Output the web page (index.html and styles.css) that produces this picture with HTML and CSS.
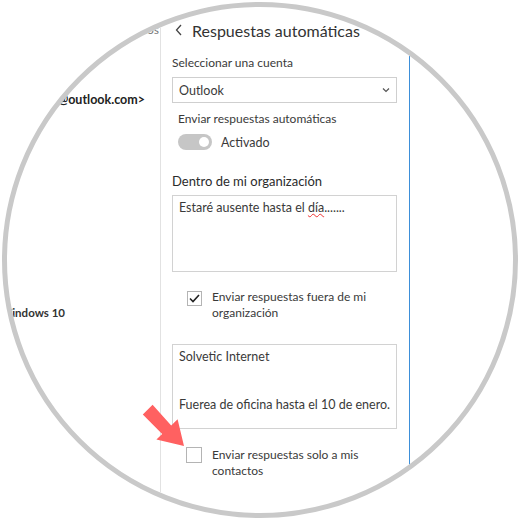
FILE: index.html
```html
<!DOCTYPE html>
<html lang="es">
<head>
  <meta charset="UTF-8">
  <title>Respuestas automáticas</title>
  <link rel="stylesheet" href="styles.css">
</head>
<body>
  <div class="lens">
    <div class="screen">
      <div class="mail-pane">
        <div class="mail-line top-line"><span>Mis contactos</span></div>
        <div class="mail-line sender"><span>Solvetic &lt;solvetic@outlook.com&gt;</span></div>
        <div class="mail-line footer-line"><span>Enviado desde Correo para Windows 10</span></div>
      </div>

      <div class="settings-pane">
        <div class="pane-title">
          <svg class="back" width="8" height="12" viewBox="0 0 8 12"><path d="M6 1 L1.5 6 L6 11" fill="none" stroke="#444" stroke-width="1.3"/></svg>
          <h1>Respuestas automáticas</h1>
        </div>

        <p class="label">Seleccionar una cuenta</p>
        <div class="select-box">
          <span>Outlook</span>
          <svg width="8" height="6" viewBox="0 0 8 6"><path d="M1 1.5 L4 4.5 L7 1.5" fill="none" stroke="#555" stroke-width="1.2"/></svg>
        </div>

        <p class="label indent">Enviar respuestas automáticas</p>
        <div class="toggle-row">
          <span class="toggle"><span class="knob"></span></span>
          <span>Activado</span>
        </div>

        <p class="section">Dentro de mi organización</p>
        <div class="text-box inside">Estaré ausente hasta el <span class="typo">día</span>.......</div>

        <div class="check-row first">
          <span class="check checked">
            <svg width="11" height="9" viewBox="0 0 11 9"><path d="M1 4.5 L4 7.5 L10 1" fill="none" stroke="#222" stroke-width="1.6"/></svg>
          </span>
          <span class="check-text">Enviar respuestas fuera de mi<br>organización</span>
        </div>

        <div class="text-box outside">Solvetic Internet


Fuerea de oficina hasta el 10 de enero.</div>

        <div class="check-row last">
          <span class="check"></span>
          <span class="check-text">Enviar respuestas solo a mis<br>contactos</span>
        </div>
      </div>
    </div>

    <svg class="pointer" width="60" height="60" viewBox="0 0 60 60">
      <polygon points="54,56 47.6,29.2 41.2,35.6 22.6,14.8 12.8,24.6 32.2,44 26.4,49.6" fill="#ff6161"/>
    </svg>
  </div>
</body>
</html>
```

FILE: styles.css
```css
body {
  margin: 0;
  background: #fff;
  font-family: "Lato", "Open Sans", sans-serif;
  color: #3a3a3a;
}

.lens {
  position: relative;
  width: 516px;
  height: 516px;
  margin: 2px;
  box-sizing: border-box;
  border: 5px solid #c9c9c9;
  border-radius: 50%;
  overflow: hidden;
  background: #fff;
}

.screen {
  display: flex;
  height: 100%;
}

/* left: mail preview */
.mail-pane {
  width: 153px;
  flex-shrink: 0;
  border-right: 1px solid #e2e2e2;
  display: flex;
  flex-direction: column;
}

.mail-line {
  display: flex;
  justify-content: flex-end;
  white-space: nowrap;
  font-size: 13px;
  line-height: 16px;
}

.top-line {
  margin-top: 15px;
  color: #777;
  font-size: 12px;
  padding-right: 1px;
}

.sender {
  margin-top: 54px;
  padding-right: 15px;
  font-weight: bold;
  color: #222;
  font-size: 12.5px;
}

.footer-line {
  margin-top: 197px;
  width: 58px;
  font-weight: bold;
  color: #333;
  font-size: 11.5px;
}

/* right: settings flyout */
.settings-pane {
  width: 225px;
  flex-shrink: 0;
  padding: 12px 12px 0 11px;
  border-right: 1px solid #3d8fd9;
}

.pane-title {
  display: flex;
  align-items: center;
  height: 22px;
}

.pane-title .back {
  margin-left: 3px;
  margin-right: 9px;
}

.pane-title h1 {
  margin: 0;
  font-size: 16px;
  font-weight: normal;
  color: #333;
  white-space: nowrap;
}

.label {
  margin: 14px 0 0;
  font-size: 12px;
  line-height: 16px;
}

.label.indent {
  margin-top: 8px;
  padding-left: 6px;
}

.select-box {
  margin-top: 6px;
  height: 24px;
  border: 1px solid #cfcfcf;
  display: flex;
  align-items: center;
  justify-content: space-between;
  padding: 0 6px;
  font-size: 12.5px;
}

.toggle-row {
  margin-top: 7px;
  padding-left: 6px;
  display: flex;
  align-items: center;
  gap: 9px;
  font-size: 12.5px;
  height: 16px;
}

.toggle {
  width: 34px;
  height: 16px;
  border-radius: 8px;
  background: #c6c6c6;
  display: flex;
  align-items: center;
  justify-content: flex-end;
  padding-right: 3px;
  box-sizing: border-box;
}

.toggle .knob {
  width: 10px;
  height: 10px;
  border-radius: 50%;
  background: #fff;
}

.section {
  margin: 22px 0 0;
  font-size: 13px;
  line-height: 18px;
  color: #2b2b2b;
}

.text-box {
  border: 1px solid #d2d2d2;
  padding: 4px 6px 0;
  box-sizing: border-box;
  font-size: 12.5px;
  line-height: 16px;
  white-space: pre-line;
}

.text-box.inside {
  margin-top: 5px;
  height: 77px;
}

.text-box.outside {
  margin-top: 23px;
  height: 85px;
}

.typo {
  text-decoration: underline wavy #e33;
  text-decoration-thickness: 1px;
}

.check-row {
  display: flex;
  align-items: flex-start;
  gap: 10px;
  padding-left: 15px;
  font-size: 12px;
  line-height: 16px;
}

.check-row.first {
  margin-top: 17px;
}

.check-row.last {
  margin-top: 18px;
  padding-left: 14px;
}

.check {
  width: 15px;
  height: 15px;
  box-sizing: border-box;
  border: 1px solid #b4b4b4;
  display: flex;
  align-items: center;
  justify-content: center;
  flex-shrink: 0;
}

.check-row.first .check {
  margin-top: 2px;
}

.check-row.last .check {
  width: 16px;
  height: 16px;
}

.pointer {
  position: absolute;
  left: 123px;
  top: 383px;
}
```
